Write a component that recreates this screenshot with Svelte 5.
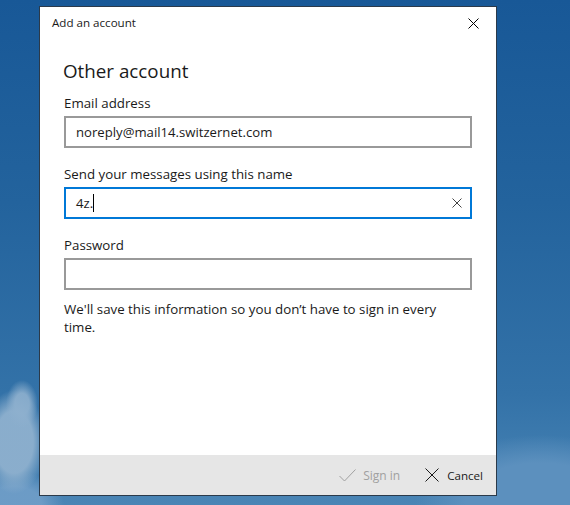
<script>
	let email = 'noreply@mail14.switzernet.com';
	let name = '4z.';
</script>

<div class="desktop">
	<div class="dialog">
		<header class="titlebar">
			<span class="title">Add an account</span>
			<svg class="close" width="11" height="11" viewBox="0 0 11 11">
				<path d="M0.5 0.5 L10.5 10.5 M10.5 0.5 L0.5 10.5" />
			</svg>
		</header>

		<div class="body">
			<h1>Other account</h1>

			<div class="label first">Email address</div>
			<div class="field">{email}</div>

			<div class="label">Send your messages using this name</div>
			<div class="field focused">
				<span>{name}</span><span class="caret"></span>
				<svg class="clear" width="10" height="10" viewBox="0 0 10 10">
					<path d="M0.5 0.5 L9.5 9.5 M9.5 0.5 L0.5 9.5" />
				</svg>
			</div>

			<div class="label">Password</div>
			<div class="field"></div>

			<p class="note">We'll save this information so you don’t have to sign in every time.</p>
		</div>

		<footer class="actions">
			<div class="action disabled">
				<svg width="17" height="13" viewBox="0 0 17 13">
					<path d="M0.5 7 L5.5 12 L16.5 0.5" />
				</svg>
				<span>Sign in</span>
			</div>
			<div class="action">
				<svg width="14" height="14" viewBox="0 0 14 14">
					<path d="M0.5 0.5 L13.5 13.5 M13.5 0.5 L0.5 13.5" />
				</svg>
				<span>Cancel</span>
			</div>
		</footer>
	</div>
</div>

<style>
	:global(body) {
		margin: 0;
	}

	.desktop {
		width: 570px;
		height: 505px;
		box-sizing: border-box;
		padding: 6px 0 0 39px;
		overflow: hidden;
		font-family: "Open Sans", "Noto Sans", sans-serif;
		color: #1a1a1a;
		background:
			radial-gradient(ellipse 16px 24px at 22px 404px, rgba(142, 176, 206, 0.9) 45%, rgba(142, 176, 206, 0) 100%),
			radial-gradient(ellipse 32px 52px at 14px 442px, rgba(142, 176, 206, 0.95) 60%, rgba(142, 176, 206, 0) 100%),
			radial-gradient(ellipse 50px 34px at 14px 505px, rgba(112, 158, 200, 0.9) 55%, rgba(112, 158, 200, 0) 100%),
			radial-gradient(ellipse 125px 70px at 540px 505px, rgba(92, 144, 190, 1) 60%, rgba(92, 144, 190, 0) 100%),
			linear-gradient(180deg, #185897 0%, #23639d 40%, #3372a8 78%, #4a85b5 100%);
	}

	.dialog {
		width: 458px;
		height: 490px;
		box-sizing: border-box;
		display: flex;
		flex-direction: column;
		background: #fff;
		border: 1px solid #2b3a4a;
	}

	.titlebar {
		display: flex;
		align-items: center;
		justify-content: space-between;
		height: 32px;
		padding: 0 17px 0 12px;
		flex: none;
	}

	.title {
		font-size: 11.6px;
		margin-top: -2px;
	}

	.close path,
	.clear path,
	.action path {
		fill: none;
		stroke: currentColor;
		stroke-width: 1;
	}

	.close {
		color: #000;
	}

	.body {
		flex: 1;
		padding: 0 24px;
	}

	h1 {
		margin: 19px 0 0 -1px;
		font-size: 18.8px;
		font-weight: 400;
		line-height: 26px;
	}

	.label {
		margin-top: 17px;
		font-size: 13.3px;
		line-height: 19px;
		height: 22px;
	}

	.label.first {
		margin-top: 10px;
	}

	.field {
		display: flex;
		align-items: center;
		height: 32px;
		box-sizing: border-box;
		padding: 0 8px 0 10px;
		border: 2px solid #999;
		font-size: 13.15px;
	}

	.field.focused {
		border-color: #0078d7;
	}

	.caret {
		display: block;
		width: 1px;
		height: 18px;
		background: #000;
	}

	.clear {
		margin-left: auto;
		color: #444;
	}

	.note {
		margin: 10px 0 0;
		font-size: 13.3px;
		line-height: 18px;
		width: 400px;
	}

	.actions {
		display: flex;
		align-items: center;
		justify-content: flex-end;
		gap: 25px;
		height: 40px;
		padding-right: 13px;
		flex: none;
		background: #e6e6e6;
	}

	.action {
		display: flex;
		align-items: center;
		gap: 8px;
		font-size: 11.6px;
	}

	.action.disabled {
		gap: 7px;
		font-size: 12px;
		color: #a0a0a0;
	}
</style>
